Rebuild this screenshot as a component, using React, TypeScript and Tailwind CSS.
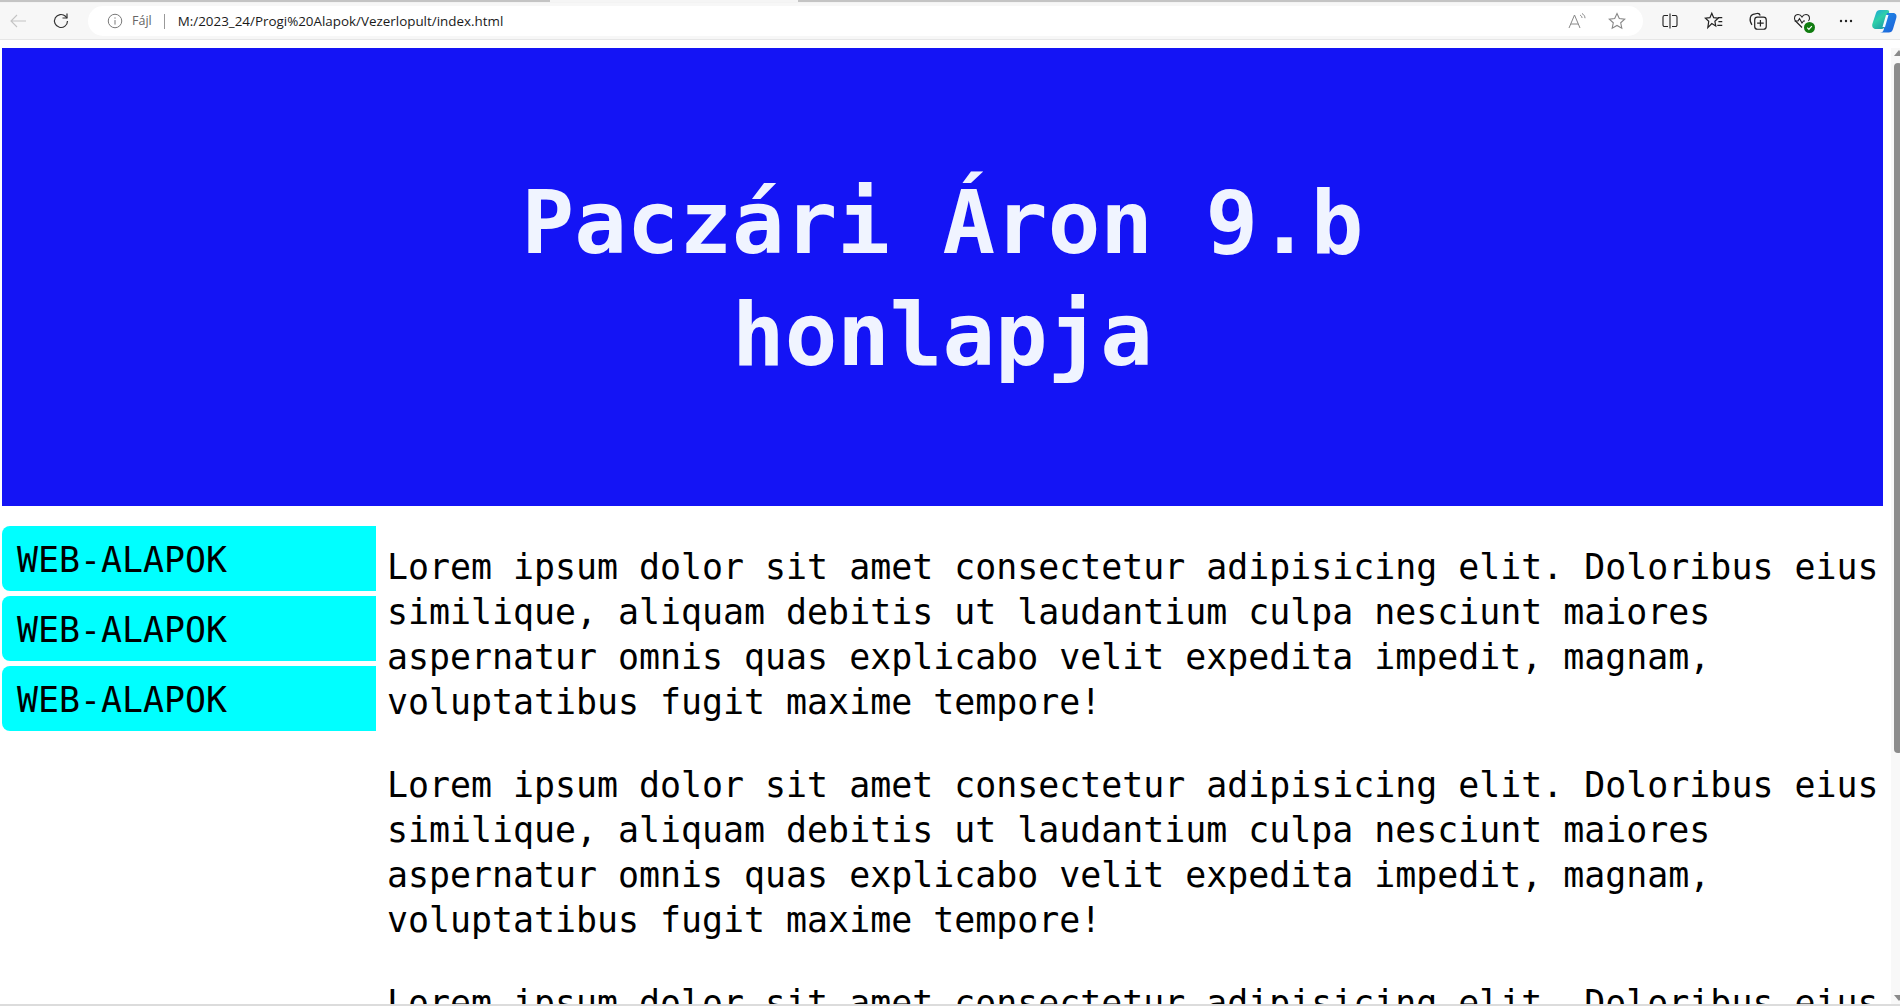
import React from "react";

const LOREM =
  "Lorem ipsum dolor sit amet consectetur adipisicing elit. Doloribus eius similique, aliquam debitis ut laudantium culpa nesciunt maiores aspernatur omnis quas explicabo velit expedita impedit, magnam, voluptatibus fugit maxime tempore!";

function Icon({ children, className }: { children: React.ReactNode; className?: string }) {
  return (
    <svg viewBox="0 0 20 20" fill="none" stroke="currentColor" strokeWidth="1.1" className={className}>
      {children}
    </svg>
  );
}

function Toolbar() {
  return (
    <div className="h-[37px] shrink-0 bg-[#f7f7f7] flex items-center border-b border-[#e6e6e6] relative">
      <Icon className="w-[20px] h-[20px] ml-[8px] text-[#c4c4c4]">
        <path d="M18 10H3M9 4l-6 6 6 6" />
      </Icon>
      <Icon className="w-[20px] h-[20px] ml-[23px] text-[#333]">
        <path d="M16.500 10a6.500 6.500 0 1 1-2-4.700L16 7" strokeWidth="1.200" />
        <path d="M16 2.500V7h-4.500" strokeWidth="1.200" />
      </Icon>
      <div className="ml-[17px] w-[1555px] h-[30px] bg-white rounded-[15px] flex items-center">
        <Icon className="w-[18px] h-[18px] ml-[18px] text-[#777]">
          <circle cx="10" cy="10" r="7.500" />
          <path d="M10 9v5M10 6v1.400" />
        </Icon>
        <span className="ml-[8px] text-[12.500px] text-[#666] font-['Open_Sans','Liberation_Sans',sans-serif]">Fájl</span>
        <span className="ml-[12px] w-px h-[15px] bg-[#999]" />
        <span className="ml-[13px] text-[13.400px] text-[#1a1a1a] font-['Open_Sans','Liberation_Sans',sans-serif]">
          M:/2023_24/Progi%20Alapok/Vezerlopult/index.html
        </span>
        <div className="ml-auto flex items-center">
          <svg viewBox="0 0 20 20" fill="none" stroke="#888" strokeWidth="1" className="w-[20px] h-[20px]">
            <path d="M2 17L7.500 4 13 17M3.800 13h7.400" />
            <path d="M13 4c1.300.8 2 1.800 2 3M15 2.500c1.800 1 3 2.700 3 4.700" />
          </svg>
          <svg viewBox="0 0 20 20" fill="none" stroke="#888" strokeWidth="1.100" className="w-[20px] h-[20px] ml-[20px] mr-[16px]">
            <path d="M10 2.500l2.300 5 5.400.6-4 3.700 1.100 5.400L10 14.500l-4.800 2.700 1.100-5.400-4-3.700 5.400-.6z" />
          </svg>
        </div>
      </div>
      <div className="flex items-center ml-[17px] text-[#222]">
        <Icon className="w-[20px] h-[20px]">
          <path d="M8 4.500H4.500a1.500 1.500 0 0 0-1.500 1.500v8a1.500 1.500 0 0 0 1.500 1.500H8M12 4.500h3.500A1.500 1.500 0 0 1 17 6v8a1.500 1.500 0 0 1-1.500 1.500H12M10 2.500v15" />
        </Icon>
        <Icon className="w-[22px] h-[22px] ml-[23px]">
          <path d="M8 3l1.700 4 4.100.5-3 2.800.8 4.200-3.600-2.200-3.600 3.700.8-5.700-3-2.800 4.100-.5z" />
          <path d="M13.500 7h4M14 10.500h3.500M13 14h4.500" />
        </Icon>
        <Icon className="w-[22px] h-[22px] ml-[22px]">
          <path d="M4.500 13.500c-1.500-2-2-4-1.500-6.500.3-1.500 1-2.500 2.500-3l3.500-.8c1.400-.2 2.600.5 3 1.800" />
          <rect x="7" y="6.500" width="10.500" height="11" rx="2.500" />
          <path d="M12.200 9v6M9.200 12h6" />
        </Icon>
        <div className="relative w-[20px] h-[20px] ml-[23px]">
          <Icon className="w-[20px] h-[20px]">
            <path d="M10 16.500L3.500 10C1.500 7.800 2.500 3.500 6 3.500c2 0 3.300 1.200 4 2.500.7-1.300 2-2.500 4-2.500 3.500 0 4.500 4.300 2.500 6.500" />
            <path d="M2.500 10H6l1.500-2.500L10 12l1.500-2H13" />
          </Icon>
          <span className="absolute right-[-3px] bottom-[-2px] w-[11px] h-[11px] rounded-full bg-[#107c10] flex items-center justify-center">
            <svg viewBox="0 0 10 10" fill="none" stroke="#fff" strokeWidth="1.300" className="w-[9px] h-[9px]">
              <path d="M2.500 5.200l1.800 1.800 3.300-3.600" />
            </svg>
          </span>
        </div>
        <svg viewBox="0 0 20 20" fill="#222" className="w-[20px] h-[20px] ml-[24px]">
          <circle cx="5" cy="10" r="1.200" />
          <circle cx="10" cy="10" r="1.200" />
          <circle cx="15" cy="10" r="1.200" />
        </svg>
        <svg viewBox="0 0 26 26" className="w-[26px] h-[26px] ml-[15px] shrink-0">
          <defs>
            <linearGradient id="copL" x1="0" y1="0" x2="0.7" y2="1">
              <stop offset="0" stopColor="#1aa0e0" />
              <stop offset="0.5" stopColor="#2fd0a8" />
              <stop offset="1" stopColor="#1c9aa8" />
            </linearGradient>
            <linearGradient id="copR" x1="0" y1="0" x2="1" y2="1">
              <stop offset="0" stopColor="#1f8fe8" />
              <stop offset="1" stopColor="#1d5fd8" />
            </linearGradient>
          </defs>
          <path d="M9 2h7c2 0 2.500 1 2 3l-4 13c-.6 2-1.500 3-3.500 3H5c-3 0-4.500-2.500-3.500-5.500L5 5c.6-2 2-3 4-3z" fill="url(#copL)" />
          <path d="M16 5h6c3 0 4 2.500 3.300 5L22 21c-.6 2.400-2.200 3.500-4.300 3.500H9c2 0 3-.6 3.800-3z" fill="url(#copR)" />
          <path d="M15 7h2.500l-3.500 12h-2.500z" fill="#f4fbff" />
        </svg>
      </div>
    </div>
  );
}

function Scrollbar() {
  return (
    <div className="w-[9px] shrink-0 bg-[#f8f8f8] overflow-hidden flex flex-col pl-[3px]">
      <svg viewBox="0 0 10 6" className="w-[10px] h-[6px] mt-[2px] shrink-0" fill="#8a8a8a">
        <path d="M5 0l5 6H0z" />
      </svg>
      <div className="w-[8px] h-[690px] mt-[7px] shrink-0 bg-[#8c8c8c] rounded-full" />
      <svg viewBox="0 0 10 6" className="w-[10px] h-[6px] mt-auto mb-[3px] shrink-0" fill="#8a8a8a">
        <path d="M5 6L0 0h10z" />
      </svg>
    </div>
  );
}

const mono = "font-['DejaVu_Sans_Mono','Liberation_Mono',monospace]";

export default function App() {
  return (
    <div className={`w-[1900px] h-[1006px] overflow-hidden flex flex-col bg-white ${mono}`}>
      <div className="h-[3px] shrink-0 flex bg-[#f3f3f3]">
        <div className="w-[550px] h-[2px] bg-[#c4c4c4]" />
        <div className="w-[248px] h-[2px] bg-[#f5f5f5]" />
        <div className="flex-1 h-[2px] bg-[#c4c4c4]" />
      </div>
      <Toolbar />
      <div className="h-[8px] shrink-0" />
      <div className="flex flex-1 min-h-0">
        <div className="flex-1 min-w-0 overflow-hidden pl-[2px] pr-[8px]">
          <header className="h-[458px] bg-[#1414f5] text-[#f0f4ff] flex items-center justify-center pt-[3px]">
            <h1 className="w-[1000px] text-center text-[87.400px] leading-[112px] font-bold">Paczári Áron 9.b honlapja</h1>
          </header>
          <div className="flex">
            <nav className="w-[374px] shrink-0 pt-[20px] flex flex-col gap-[5px]">
              {[0, 1, 2].map((i) => (
                <div
                  key={i}
                  className="h-[65px] bg-[#00ffff] rounded-l-[8px] pl-[15px] pt-[4px] flex items-center text-[34.900px] text-black"
                >
                  WEB-ALAPOK
                </div>
              ))}
            </nav>
            <main className="flex-1 pl-[11px] pt-[39px] text-[34.900px] leading-[45px] text-black">
              <p className="mb-[38px]">{LOREM}</p>
              <p className="mb-[38px]">{LOREM}</p>
              <p>{LOREM}</p>
            </main>
          </div>
        </div>
        <Scrollbar />
      </div>
      <div className="h-[2px] shrink-0 bg-[#dcdcdc]" />
    </div>
  );
}
